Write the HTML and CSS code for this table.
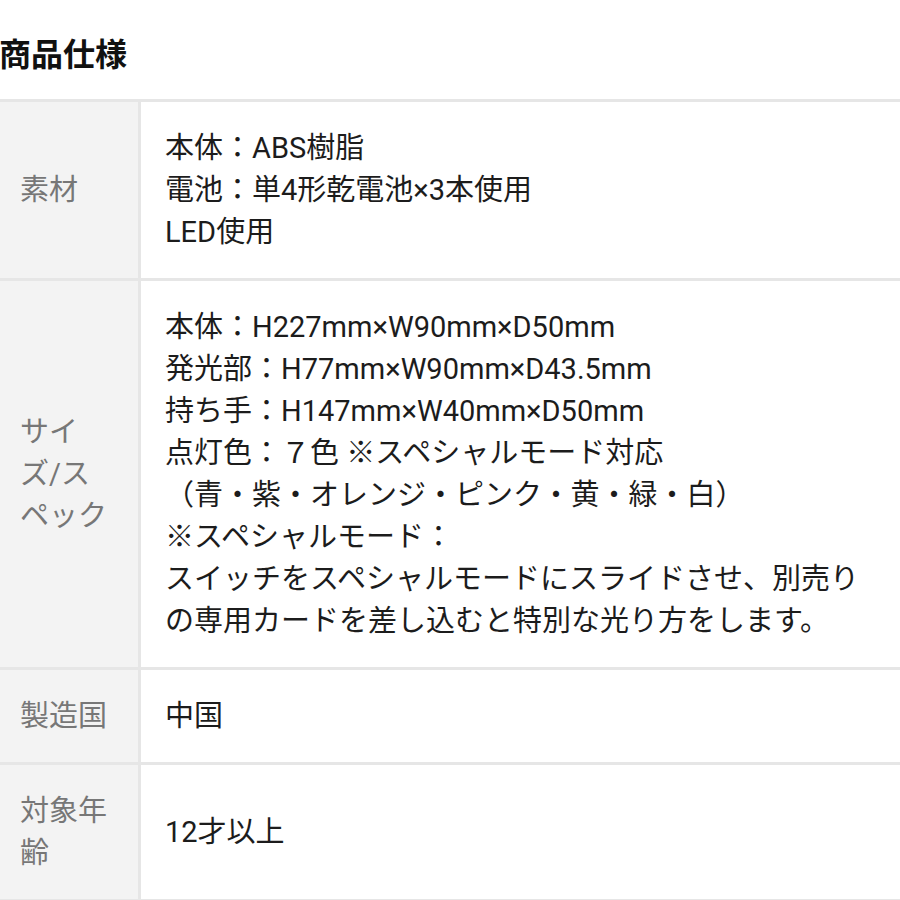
FILE: index.html
```html
<!DOCTYPE html>
<html lang="ja">
<head>
  <meta charset="UTF-8">
  <meta name="viewport" content="width=device-width, initial-scale=1.0">
  <title>商品仕様</title>
  <link rel="stylesheet" href="styles.css">
</head>
<body>
  <!-- Section title -->
  <div class="spec-header">
    <h2>商品仕様</h2>
  </div>

  <!-- Spec table -->
  <div class="spec-table">
    <div class="spec-row">
      <div class="spec-label">素材</div>
      <div class="spec-value">
        <p>
          本体：ABS樹脂<br>
          電池：単4形乾電池×3本使用<br>
          LED使用
        </p>
      </div>
    </div>

    <div class="spec-row">
      <div class="spec-label">サイズ/スペック</div>
      <div class="spec-value">
        <p>
          本体：H227mm×W90mm×D50mm<br>
          発光部：H77mm×W90mm×D43.5mm<br>
          持ち手：H147mm×W40mm×D50mm<br>
          点灯色：７色 <span class="jp">※</span>スペシャルモード対応<br>
          （青・紫・オレンジ・ピンク・黄・緑・白）<br>
          <span class="jp">※</span>スペシャルモード：<br>
          スイッチをスペシャルモードにスライドさせ、別売りの専用カードを差し込むと特別な光り方をします。
        </p>
      </div>
    </div>

    <div class="spec-row">
      <div class="spec-label">製造国</div>
      <div class="spec-value"><p>中国</p></div>
    </div>

    <div class="spec-row">
      <div class="spec-label">対象年齢</div>
      <div class="spec-value"><p>12才以上</p></div>
    </div>
  </div>
</body>
</html>
```

FILE: styles.css
```css
/* Base */
body {
  margin: 0;
  background-color: #fff;
  color: #1c1c1c;
  font-family: Roboto, "Noto Sans CJK JP", sans-serif;
  font-size: 29px;
  line-height: 42px;
}

p {
  margin: 0;
}

/* keep the reference mark in the Japanese face */
.jp {
  font-family: "Noto Sans CJK JP", sans-serif;
  line-height: 1;
}

/* Title */
.spec-header {
  height: 99px;
  display: flex;
  align-items: center;
  padding-top: 4px;
  box-sizing: border-box;
}

.spec-header h2 {
  margin: 0 0 0 -1px;
  font-family: "Noto Sans CJK JP", sans-serif;
  font-size: 32px;
  font-weight: 700;
  line-height: 1;
  color: #111;
}

/* Table */
.spec-table {
  border-top: 3px solid #e6e6e6;
}

.spec-row {
  display: grid;
  grid-template-columns: 141px 1fr;
  border-bottom: 3px solid #e6e6e6;
}

.spec-label {
  display: flex;
  align-items: center;
  padding: 25px 28px 25px 20px;
  background-color: #f3f3f3;
  border-right: 3px solid #e6e6e6;
  color: #777;
}

.spec-value {
  display: flex;
  align-items: center;
  padding: 25px 30px 25px 24px;
}
```
